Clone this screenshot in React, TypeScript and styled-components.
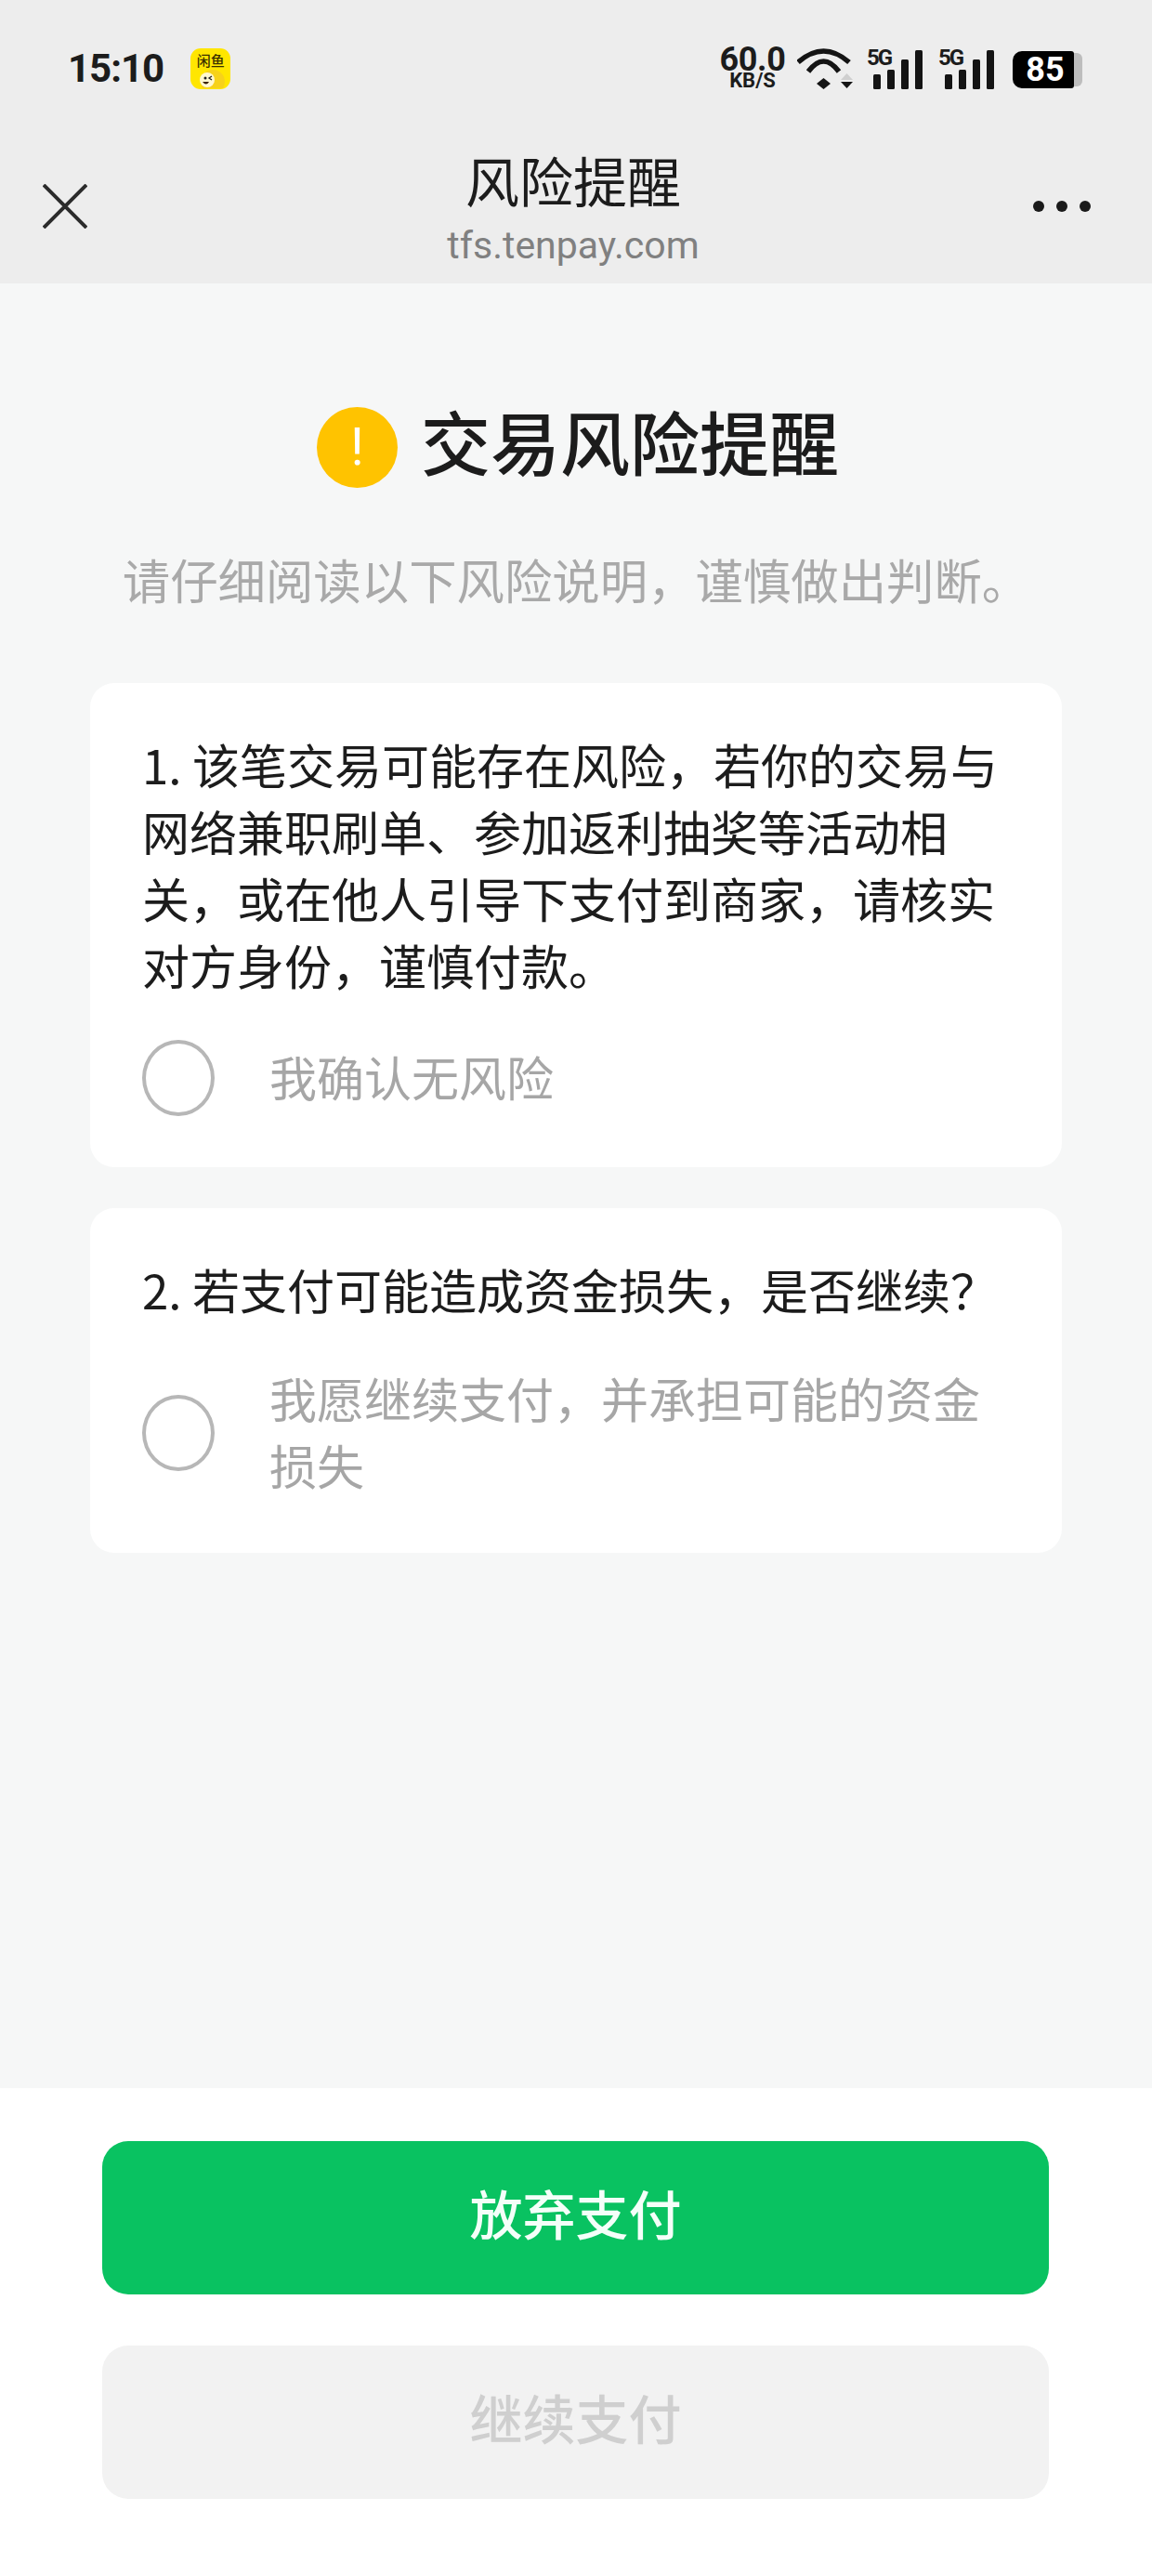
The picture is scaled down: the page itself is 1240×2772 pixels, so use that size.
import React from "react";
import styled, {createGlobalStyle} from "styled-components";

const GlobalStyle = createGlobalStyle`
    html, body{
        margin: 0;
        padding: 0;
        background: #f6f7f7;
    }
    *{
        box-sizing: border-box;
    }
`

const cjk = `"Noto Sans CJK SC", "Noto Sans", sans-serif`;
const latin = `Roboto, "Noto Sans CJK SC", sans-serif`;

const Page = styled.div`
    width: 1240px;
    height: 2772px;
    display: flex;
    flex-direction: column;
    overflow: hidden;
    font-family: ${cjk};
    color: #1c1c1c;
`

const TopArea = styled.header`
    height: 305px;
    background: #ededed;
    flex: none;
`

const StatusBar = styled.div`
    height: 118px;
    padding: 52px 0 0 73px;
    display: flex;
    justify-content: space-between;
    align-items: flex-start;
`

const StatusLeft = styled.div`
    display: flex;
    align-items: center;
    gap: 29px;
    height: 44px;
`

const Time = styled.span`
    font-family: ${latin};
    font-size: 42px;
    font-weight: 700;
    letter-spacing: -1px;
    line-height: 44px;
`

const AppBadge = styled.div`
    width: 43px;
    height: 44px;
    border-radius: 11px;
    background: #ffe600;
    display: flex;
    flex-direction: column;
    align-items: center;
    overflow: hidden;
    span{
        font-size: 15px;
        line-height: 18px;
        margin-top: 4px;
        font-weight: 500;
        color: #3a3000;
        white-space: nowrap;
    }
`

const StatusRight = styled.div`
    display: flex;
    align-items: flex-start;
    margin-right: 75px;
    height: 44px;
`

const Speed = styled.div`
    width: 70px;
    margin-right: 13px;
    display: flex;
    flex-direction: column;
    align-items: center;
    font-family: ${latin};
    font-weight: 700;
    strong{
        font-size: 36px;
        line-height: 28px;
        margin-top: -2px;
        font-weight: 700;
        letter-spacing: -0.4px;
    }
    small{
        font-size: 22px;
        line-height: 18px;
        font-weight: 700;
    }
`

const WifiIcon = styled.svg`
    width: 60px;
    height: 44px;
    margin-right: 15px;
`

const Signal = styled.div`
    position: relative;
    width: 60px;
    height: 44px;
    margin-right: 17px;
    padding-left: 7px;
    display: flex;
    align-items: flex-end;
    gap: 7px;
`

const SignalLabel = styled.span`
    position: absolute;
    left: 0;
    top: -2px;
    font-family: ${latin};
    font-size: 24px;
    line-height: 24px;
    font-weight: 700;
    letter-spacing: -2px;
`

const SignalBar = styled.i<{$h: number}>`
    width: 8px;
    height: ${p => p.$h}px;
    border-radius: 1.5px;
    background: #141414;
`

const Battery = styled.div`
    display: flex;
    align-items: center;
    margin: 3px 0 0 3px;
`

const BatteryBody = styled.div`
    width: 66px;
    height: 40px;
    padding-left: 4px;
    border-radius: 10px 3px 3px 10px;
    background: #000;
    color: #fff;
    font-family: ${latin};
    font-size: 36px;
    font-weight: 700;
    line-height: 40px;
    text-align: center;
`

const BatteryTip = styled.div`
    width: 9px;
    height: 36px;
    border-radius: 0 6px 6px 0;
    background: #bdbdbd;
`

const NavBar = styled.nav`
    height: 187px;
    display: grid;
    grid-template-columns: 1fr auto 1fr;
    padding: 0 52px 0 46px;
`

const CloseButton = styled.svg`
    width: 48px;
    height: 48px;
    margin-top: 80px;
`

const NavTitle = styled.div`
    display: flex;
    flex-direction: column;
    align-items: center;
`

const TitleText = styled.div`
    font-size: 58px;
    line-height: 74px;
    margin-top: 38px;
    font-weight: 400;
`

const UrlText = styled.div`
    font-family: ${latin};
    font-size: 41px;
    line-height: 48px;
    margin-top: 10px;
    color: #808080;
`

const MoreDots = styled.div`
    justify-self: end;
    display: flex;
    gap: 13px;
    margin: 98px 14px 0 0;
    i{
        width: 12px;
        height: 12px;
        border-radius: 50%;
        background: #1a1a1a;
    }
`

const Main = styled.main`
    flex: 1;
    background: #f6f7f7;
    padding: 0 97px;
`

const Heading = styled.div`
    margin-top: 132px;
    padding-left: 4px;
    display: flex;
    justify-content: center;
    align-items: center;
    gap: 25px;
    height: 88px;
`

const WarnIcon = styled.div`
    width: 87px;
    height: 87px;
    border-radius: 50%;
    background: #ffc300;
    color: #fff;
    font-family: ${latin};
    font-size: 56px;
    font-weight: 400;
    line-height: 87px;
    text-align: center;
`

const HeadingText = styled.h1`
    margin: 0;
    padding-bottom: 14px;
    font-size: 75px;
    line-height: 88px;
    font-weight: 500;
`

const Subtitle = styled.p`
    margin: 62px 0 0;
    font-size: 51.4px;
    line-height: 72px;
    color: #a9a9a9;
    text-align: center;
    white-space: nowrap;
`

const Card = styled.section`
    margin-top: 76px;
    padding: 51px 53px 55px 56px;
    background: #fff;
    border-radius: 26px;
    & + &{
        margin-top: 44px;
    }
`

const Question = styled.p`
    margin: 0;
    font-size: 51px;
    line-height: 72px;
`

const Option = styled.label`
    margin-top: 45px;
    display: flex;
    align-items: center;
    gap: 59px;
`

const Radio = styled.span`
    flex: none;
    width: 78px;
    height: 82px;
    border: 4px solid #b7b7b7;
    border-radius: 50%;
`

const OptionText = styled.span`
    padding-bottom: 4px;
    font-size: 51px;
    line-height: 72px;
    color: #a6a6a6;
`

const Footer = styled.footer`
    flex: none;
    height: 525px;
    background: #fff;
    padding: 57px 111px 0 110px;
    display: flex;
    flex-direction: column;
    gap: 55px;
`

const ActionButton = styled.button<{$primary?: boolean}>`
    height: 165px;
    padding: 0 0 14px;
    border: none;
    border-radius: 28px;
    font-family: ${cjk};
    font-size: 57px;
    font-weight: 500;
    background: ${p => p.$primary ? "#09c261" : "#f2f2f2"};
    color: ${p => p.$primary ? "#f4fff9" : "#cfcfcf"};
`

const App = () => {
    return (
        <Page>
            <GlobalStyle/>
            <TopArea>
                <StatusBar>
                    <StatusLeft>
                        <Time>15:10</Time>
                        <AppBadge>
                            <span>闲鱼</span>
                            <svg width="34" height="21" viewBox="0 0 34 21">
                                <circle cx="19" cy="14" r="13" fill="#f7d21a"/>
                                <circle cx="13" cy="12" r="8" fill="#fff8d0"/>
                                <circle cx="11" cy="10" r="1.5" fill="#222"/>
                                <path d="M18 8l-3 2 3 2" fill="none" stroke="#222" strokeWidth="1.3"/>
                                <path d="M8 14h7q-3 5-7 0z" fill="#3a2200"/>
                            </svg>
                        </AppBadge>
                    </StatusLeft>
                    <StatusRight>
                        <Speed>
                            <strong>60.0</strong>
                            <small>KB/S</small>
                        </Speed>
                        <WifiIcon viewBox="0 0 60 44">
                            <path d="M1 15Q28.5 -9 56 15" fill="none" stroke="#141414" strokeWidth="5.5"/>
                            <path d="M12 25Q28.5 3 45 25" fill="none" stroke="#141414" strokeWidth="5.5"/>
                            <polygon points="28.5,32 36,38 28.5,44 21,38" fill="#141414"/>
                            <polygon points="47,34 60,34 53.5,27" fill="#cfcfcf"/>
                            <polygon points="47,36 60,36 53.5,43" fill="#141414"/>
                        </WifiIcon>
                        <Signal>
                            <SignalLabel>5G</SignalLabel>
                            <SignalBar $h={16}/>
                            <SignalBar $h={21}/>
                            <SignalBar $h={32}/>
                            <SignalBar $h={42}/>
                        </Signal>
                        <Signal>
                            <SignalLabel>5G</SignalLabel>
                            <SignalBar $h={16}/>
                            <SignalBar $h={21}/>
                            <SignalBar $h={32}/>
                            <SignalBar $h={42}/>
                        </Signal>
                        <Battery>
                            <BatteryBody>85</BatteryBody>
                            <BatteryTip/>
                        </Battery>
                    </StatusRight>
                </StatusBar>
                <NavBar>
                    <CloseButton viewBox="0 0 48 48">
                        <path d="M1 1L47 47M47 1L1 47" stroke="#2b2b2b" strokeWidth="4" fill="none"/>
                    </CloseButton>
                    <NavTitle>
                        <TitleText>风险提醒</TitleText>
                        <UrlText>tfs.tenpay.com</UrlText>
                    </NavTitle>
                    <MoreDots>
                        <i/>
                        <i/>
                        <i/>
                    </MoreDots>
                </NavBar>
            </TopArea>
            <Main>
                <Heading>
                    <WarnIcon>!</WarnIcon>
                    <HeadingText>交易风险提醒</HeadingText>
                </Heading>
                <Subtitle>请仔细阅读以下风险说明，谨慎做出判断。</Subtitle>
                <Card>
                    <Question>1. 该笔交易可能存在风险，若你的交易与网络兼职刷单、参加返利抽奖等活动相关，或在他人引导下支付到商家，请核实对方身份，谨慎付款。</Question>
                    <Option>
                        <Radio/>
                        <OptionText>我确认无风险</OptionText>
                    </Option>
                </Card>
                <Card>
                    <Question>2. 若支付可能造成资金损失，是否继续？</Question>
                    <Option>
                        <Radio/>
                        <OptionText>我愿继续支付，并承担可能的资金损失</OptionText>
                    </Option>
                </Card>
            </Main>
            <Footer>
                <ActionButton $primary>放弃支付</ActionButton>
                <ActionButton>继续支付</ActionButton>
            </Footer>
        </Page>
    )
}

export default App;
